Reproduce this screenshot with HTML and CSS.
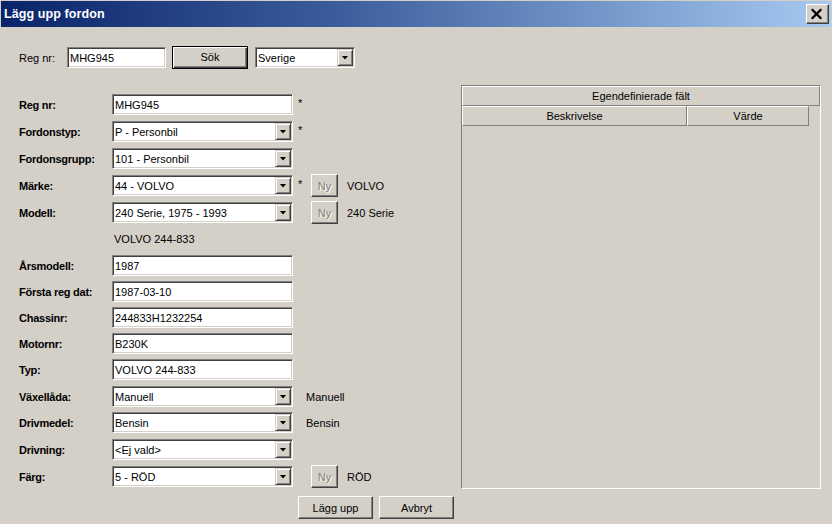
FILE: index.html
```html
<!DOCTYPE html>
<html lang="sv">
<head>
<meta charset="utf-8">
<title>Lägg upp fordon</title>
<link rel="stylesheet" href="styles.css">
</head>
<body>
<div class="window">
  <div class="titlebar">
    <span class="title">Lägg upp fordon</span>
    <div class="close">
      <svg width="23" height="20" viewBox="0 0 23 20"><path d="M6 5 L16 15 M16 5 L6 15" stroke="#000" stroke-width="2.4" fill="none"/></svg>
    </div>
  </div>
  <div class="content">
    <div class="search">
      <span class="search-label">Reg nr:</span>
      <div class="field f-search">MHG945</div>
      <div class="btn btn-default btn-sok">Sök</div>
      <div class="field combo f-country"><span class="val">Sverige</span><span class="arrow"></span></div>
    </div>
    <div class="main">
      <div class="form">
        <div class="row first">
          <span class="lbl">Reg nr:</span>
          <div class="field wide">MHG945</div>
          <span class="star">*</span>
        </div>
        <div class="row">
          <span class="lbl">Fordonstyp:</span>
          <div class="field combo wide"><span class="val">P - Personbil</span><span class="arrow"></span></div>
          <span class="star">*</span>
        </div>
        <div class="row">
          <span class="lbl">Fordonsgrupp:</span>
          <div class="field combo wide"><span class="val">101 - Personbil</span><span class="arrow"></span></div>
        </div>
        <div class="row">
          <span class="lbl">Märke:</span>
          <div class="field combo wide"><span class="val">44 - VOLVO</span><span class="arrow"></span></div>
          <span class="star">*</span>
          <div class="btn ny">Ny</div>
          <span class="side">VOLVO</span>
        </div>
        <div class="row">
          <span class="lbl">Modell:</span>
          <div class="field combo wide"><span class="val">240 Serie, 1975 - 1993</span><span class="arrow"></span></div>
          <span class="star"></span>
          <div class="btn ny">Ny</div>
          <span class="side">240 Serie</span>
        </div>
        <div class="row r5">
          <span class="lbl"></span>
          <span class="model-text">VOLVO 244-833</span>
        </div>
        <div class="row">
          <span class="lbl">Årsmodell:</span>
          <div class="field wide">1987</div>
        </div>
        <div class="row r5">
          <span class="lbl">Första reg dat:</span>
          <div class="field wide">1987-03-10</div>
        </div>
        <div class="row r5">
          <span class="lbl">Chassinr:</span>
          <div class="field wide">244833H1232254</div>
        </div>
        <div class="row r5">
          <span class="lbl">Motornr:</span>
          <div class="field wide">B230K</div>
        </div>
        <div class="row r5">
          <span class="lbl">Typ:</span>
          <div class="field wide">VOLVO 244-833</div>
        </div>
        <div class="row">
          <span class="lbl">Växellåda:</span>
          <div class="field combo wide"><span class="val">Manuell</span><span class="arrow"></span></div>
          <span class="side near">Manuell</span>
        </div>
        <div class="row r5">
          <span class="lbl">Drivmedel:</span>
          <div class="field combo wide"><span class="val">Bensin</span><span class="arrow"></span></div>
          <span class="side near">Bensin</span>
        </div>
        <div class="row">
          <span class="lbl">Drivning:</span>
          <div class="field combo wide"><span class="val">&lt;Ej vald&gt;</span><span class="arrow"></span></div>
        </div>
        <div class="row">
          <span class="lbl">Färg:</span>
          <div class="field combo wide"><span class="val">5 - RÖD</span><span class="arrow"></span></div>
          <span class="star"></span>
          <div class="btn ny">Ny</div>
          <span class="side">RÖD</span>
        </div>
        <div class="actions">
          <div class="btn action">Lägg upp</div>
          <div class="btn action">Avbryt</div>
        </div>
      </div>
      <div class="panel">
        <div class="hdr hdr-top">Egendefinierade fält</div>
        <div class="hdr-row">
          <div class="hdr hdr-desc">Beskrivelse</div>
          <div class="hdr hdr-val">Värde</div>
        </div>
      </div>
    </div>
  </div>
</div>
</body>
</html>
```
FILE: styles.css
```css
* { box-sizing: border-box; }
html, body {
  margin: 0;
  padding: 0;
  width: 832px;
  height: 524px;
  overflow: hidden;
  background: #d4d0c8;
  font-family: "Liberation Sans", Arial, sans-serif;
  font-size: 11px;
  color: #000;
}
.window {
  width: 832px;
  height: 524px;
  padding: 1px 1px 0 1px;
  background: #d4d0c8;
}
.titlebar {
  height: 26px;
  display: flex;
  align-items: center;
  justify-content: space-between;
  padding: 0 2px 0 3px;
  background: linear-gradient(to right, #0a246a 0%, #3a5c9c 40%, #a6caf0 100%);
}
.title {
  color: #fff;
  font-weight: bold;
  font-size: 12.5px;
  letter-spacing: 0.1px;
}
.close {
  width: 23px;
  height: 20px;
  background: #d4d0c8;
  border: 1px solid;
  border-color: #fff #404040 #404040 #fff;
  box-shadow: inset -1px -1px #808080;
  display: flex;
}
.close svg { margin: -1px 0 0 -1px; }

.content { padding-left: 18px; }

.search {
  margin-top: 19px;
  height: 23px;
  display: flex;
  align-items: center;
}
.search-label { width: 48px; }

.field {
  height: 21px;
  background: #fff;
  border: 1px solid;
  border-color: #808080 #fff #fff #808080;
  box-shadow: inset 1px 1px #404040, inset -1px -1px #d4d0c8;
  padding: 0 2px;
  display: flex;
  align-items: center;
  white-space: nowrap;
}
.combo { padding: 1px 1px 1px 2px; }
.combo .val { flex: 1; }
.arrow {
  width: 16px;
  height: 17px;
  background: #d4d0c8;
  border: 1px solid;
  border-color: #d4d0c8 #404040 #404040 #d4d0c8;
  box-shadow: inset 1px 1px #fff, inset -1px -1px #808080;
  display: flex;
  align-items: center;
  justify-content: center;
}
.arrow::after {
  content: "";
  width: 7px;
  height: 4px;
  background: #000;
  clip-path: polygon(0 0, 100% 0, 50% 100%);
}

.f-search { width: 99px; }
.f-country { width: 100px; margin-left: 7px; }

.btn {
  background: #d4d0c8;
  border: 1px solid;
  border-color: #fff #404040 #404040 #fff;
  box-shadow: inset -1px -1px #808080;
  display: flex;
  align-items: center;
  justify-content: center;
}
.btn-sok {
  width: 76px;
  height: 23px;
  margin-left: 6px;
  padding-bottom: 1px;
  border-color: #000;
  box-shadow: inset 1px 1px #fff, inset -1px -1px #404040, inset -2px -2px #808080;
}

.main {
  margin-top: 16px;
  display: flex;
  align-items: flex-start;
}
.form {
  width: 442px;
  padding-top: 9px;
  display: flex;
  flex-direction: column;
}
.row {
  height: 21px;
  margin-top: 6px;
  display: flex;
  align-items: center;
  white-space: nowrap;
}
.row.first { margin-top: 0; }
.row.r5 { margin-top: 5px; }
.lbl {
  width: 93px;
  font-weight: bold;
  letter-spacing: -0.25px;
}
.wide { width: 181px; }
.star {
  width: 18px;
  padding-left: 5px;
  align-self: flex-start;
  margin-top: 3px;
}
.ny {
  width: 27px;
  height: 23px;
  color: #808080;
  text-shadow: 1px 1px 0 #fff;
  border-color: #fff #404040 #404040 #fff;
}
.side { margin-left: 9px; }
.side.near { margin-left: 13px; }
.model-text { padding-left: 2px; }

.actions {
  margin-top: 9px;
  padding-left: 279px;
  display: flex;
  gap: 6px;
}
.action {
  width: 75px;
  height: 23px;
}

.panel {
  width: 360px;
  height: 404px;
  border: 1px solid;
  border-color: #808080 #fff #fff #808080;
}
.hdr {
  height: 20px;
  border: 1px solid;
  border-color: #fff #808080 #808080 #fff;
  display: flex;
  align-items: center;
  justify-content: center;
}
.hdr-top { width: 358px; }
.hdr-row { display: flex; }
.hdr-desc { width: 225px; }
.hdr-val { width: 122px; }
```
